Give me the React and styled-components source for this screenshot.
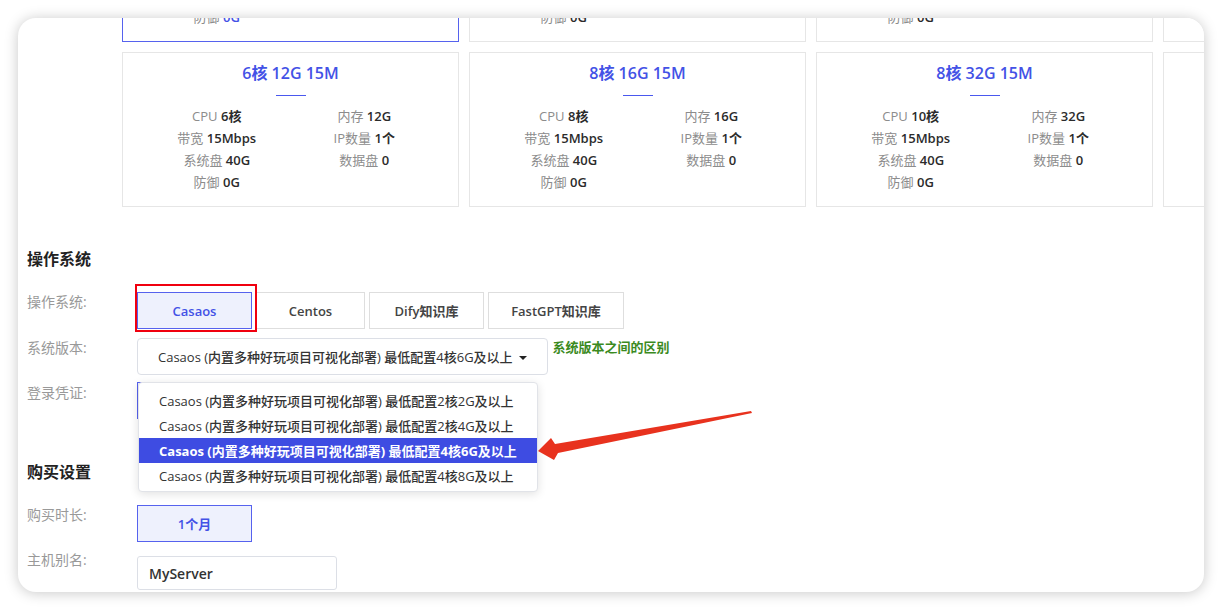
import React from "react";
import styled, { createGlobalStyle, css } from "styled-components";

const GlobalStyle = createGlobalStyle`
  html, body { margin: 0; padding: 0; background: #ffffff; }
  body {
    font-family: "Open Sans", "Noto Sans CJK SC", sans-serif;
    color: #333;
    -webkit-font-smoothing: antialiased;
  }
  * { box-sizing: border-box; }
`;

const BLUE = "#4352e6";

const Page = styled.div`
  width: 1222px;
  height: 610px;
  padding: 18px;
  display: flex;
  overflow: hidden;
`;

const Panel = styled.div`
  position: relative;
  flex: 1;
  background: #fff;
  border-radius: 18px;
  box-shadow: 0 1px 14px rgba(0, 0, 0, 0.22);
  overflow: hidden;
`;

const Content = styled.div`
  margin-top: -131px;
  padding-left: 9px;
  display: flex;
  flex-direction: column;
`;

const CardGrid = styled.div`
  margin-left: 95px;
  display: grid;
  grid-template-columns: repeat(4, 337px);
  grid-auto-rows: 155px;
  gap: 10px;
`;

const Card = styled.div`
  border: 1px solid ${(p) => (p.$selected ? "#5662ee" : "#e6e6e6")};
  background: #fff;
  padding: 9px 20px 0;
  display: flex;
  flex-direction: column;
  align-items: center;
`;

const CardTitle = styled.div`
  font-size: 16px;
  line-height: 22px;
  font-weight: 600;
  color: ${BLUE};
`;

const TitleLine = styled.div`
  width: 30px;
  height: 0;
  border-top: 1px solid #4a58ee;
  margin-top: 11px;
`;

const Specs = styled.div`
  margin-top: 9px;
  width: 100%;
  display: grid;
  grid-template-columns: 1fr 1fr;
  grid-auto-rows: 22px;
`;

const Spec = styled.div`
  text-align: center;
  font-size: 13px;
  line-height: 22px;
  color: #8c8c8c;
  white-space: nowrap;
`;

const SpecValue = styled.span`
  color: ${(p) => (p.$selected ? BLUE : "#2b2b2b")};
  font-weight: 600;
`;

const Heading = styled.div`
  font-size: 16px;
  line-height: 22px;
  font-weight: 700;
  color: #222;
  margin-top: ${(p) => p.$mt}px;
`;

const Row = styled.div`
  display: flex;
  align-items: flex-start;
  margin-top: ${(p) => p.$mt}px;
`;

const Label = styled.div`
  width: 110px;
  flex: none;
  font-size: 14px;
  line-height: 20px;
  color: #999;
  margin-top: ${(p) => p.$offset || 0}px;
  white-space: nowrap;
`;

const ButtonGroup = styled.div`
  position: relative;
  display: flex;
  gap: 4px;
`;

const OptionButton = styled.div`
  width: ${(p) => p.$w}px;
  height: 37px;
  display: flex;
  align-items: center;
  justify-content: center;
  font-size: 13px;
  font-weight: 600;
  white-space: nowrap;
  ${(p) =>
    p.$active
      ? css`
          border: 1px solid #5662ee;
          background: #eef1fd;
          color: ${BLUE};
        `
      : css`
          border: 1px solid #dedede;
          background: #fff;
          color: #444;
        `}
`;

const Annotation = styled.div`
  position: absolute;
  left: -2px;
  top: -8px;
  width: 122px;
  height: 48px;
  border: 2.5px solid #f0000f;
  pointer-events: none;
`;

const SelectWrap = styled.div`
  position: relative;
  display: flex;
  align-items: flex-start;
  gap: 5px;
`;

const SelectBox = styled.div`
  height: 37px;
  padding: 0 20px;
  display: inline-flex;
  align-items: center;
  gap: 4px;
  border: 1px solid #dcdfe6;
  border-radius: 4px;
  font-size: 13px;
  font-weight: 500;
  color: #333;
  white-space: nowrap;
`;

const Caret = styled.span`
  width: 0;
  height: 0;
  border-left: 4px solid transparent;
  border-right: 4px solid transparent;
  border-top: 4px solid #222;
  margin-left: 2px;
  margin-top: 2px;
`;

const HelpLink = styled.div`
  font-size: 13px;
  line-height: 20px;
  font-weight: 700;
  color: #3b8a1e;
  white-space: nowrap;
  margin-top: -1px;
`;

const Dropdown = styled.div`
  position: absolute;
  left: 1px;
  top: 44px;
  width: 400px;
  padding: 5px 0 3px;
  background: #fff;
  border: 1px solid #e1e3e8;
  border-radius: 4px;
  box-shadow: 0 2px 10px rgba(0, 0, 0, 0.12);
  z-index: 5;
`;

const DropItem = styled.div`
  height: 25px;
  padding: 0 20px;
  display: flex;
  align-items: center;
  font-size: 13px;
  white-space: nowrap;
  font-weight: ${(p) => (p.$active ? 700 : 500)};
  color: ${(p) => (p.$active ? "#fff" : "#333")};
  background: ${(p) => (p.$active ? "#3e4ce2" : "transparent")};
`;

const TextInput = styled.div`
  width: 200px;
  height: 34px;
  padding: 0 11px;
  display: flex;
  align-items: center;
  border: 1px solid #dcdfe6;
  border-radius: 3px;
  font-size: 14px;
  font-weight: 600;
  color: #333;
`;

const ArrowSvg = styled.svg`
  position: absolute;
  left: 520px;
  top: 390px;
  width: 216px;
  height: 54px;
  pointer-events: none;
  z-index: 6;
`;

const cards = [
  { title: "4核 6G 15M", cpu: "4核", mem: "6G", sel: true },
  { title: "4核 8G 15M", cpu: "4核", mem: "8G" },
  { title: "6核 8G 15M", cpu: "6核", mem: "8G" },
  { title: "6核 10G 15M", cpu: "6核", mem: "10G" },
  { title: "6核 12G 15M", cpu: "6核", mem: "12G" },
  { title: "8核 16G 15M", cpu: "8核", mem: "16G" },
  { title: "8核 32G 15M", cpu: "10核", mem: "32G" },
  { title: "16核 32G 15M", cpu: "16核", mem: "32G" },
];

const osList = [
  { name: "Casaos", w: 115, active: true },
  { name: "Centos", w: 109 },
  { name: "Dify知识库", w: 115 },
  { name: "FastGPT知识库", w: 136 },
];

const versions = ["2核2G", "2核4G", "4核6G", "4核8G"];
const verText = (v) => `Casaos (内置多种好玩项目可视化部署) 最低配置${v}及以上`;

function PlanCard({ c }) {
  const specs = [
    ["CPU", c.cpu],
    ["内存", c.mem],
    ["带宽", "15Mbps"],
    ["IP数量", "1个"],
    ["系统盘", "40G"],
    ["数据盘", "0"],
    ["防御", "0G"],
  ];
  return (
    <Card $selected={c.sel}>
      <CardTitle>{c.title}</CardTitle>
      <TitleLine />
      <Specs>
        {specs.map(([k, v]) => (
          <Spec key={k}>
            {k} <SpecValue $selected={c.sel}>{v}</SpecValue>
          </Spec>
        ))}
      </Specs>
    </Card>
  );
}

export default function App() {
  return (
    <>
      <GlobalStyle />
      <Page>
        <Panel>
          <Content>
            <CardGrid>
              {cards.map((c) => (
                <PlanCard key={c.title} c={c} />
              ))}
            </CardGrid>

            <Heading $mt={41}>操作系统</Heading>
            <Row $mt={22}>
              <Label>操作系统:</Label>
              <ButtonGroup>
                {osList.map((o) => (
                  <OptionButton key={o.name} $w={o.w} $active={o.active}>
                    {o.name}
                  </OptionButton>
                ))}
                <Annotation />
              </ButtonGroup>
            </Row>
            <Row $mt={9}>
              <Label>系统版本:</Label>
              <SelectWrap>
                <SelectBox>
                  {verText("4核6G")}
                  <Caret />
                </SelectBox>
                <HelpLink>系统版本之间的区别</HelpLink>
                <Dropdown>
                  {versions.map((v) => (
                    <DropItem key={v} $active={v === "4核6G"}>
                      {verText(v)}
                    </DropItem>
                  ))}
                </Dropdown>
              </SelectWrap>
            </Row>
            <Row $mt={7}>
              <Label $offset={1}>登录凭证:</Label>
              <ButtonGroup>
                <OptionButton $w={115} $active>
                  密码
                </OptionButton>
                <OptionButton $w={115}>SSH密钥</OptionButton>
              </ButtonGroup>
            </Row>

            <Heading $mt={42}>购买设置</Heading>
            <Row $mt={22}>
              <Label>购买时长:</Label>
              <OptionButton $w={115} $active>
                1个月
              </OptionButton>
            </Row>
            <Row $mt={14}>
              <Label $offset={-6}>主机别名:</Label>
              <TextInput>MyServer</TextInput>
            </Row>
          </Content>

          <ArrowSvg viewBox="0 0 216 54">
            <polygon
              points="0,43 13,30 17,36 213,3 214,5 20,45 16,52"
              fill="#e8321e"
            />
          </ArrowSvg>
        </Panel>
      </Page>
    </>
  );
}
